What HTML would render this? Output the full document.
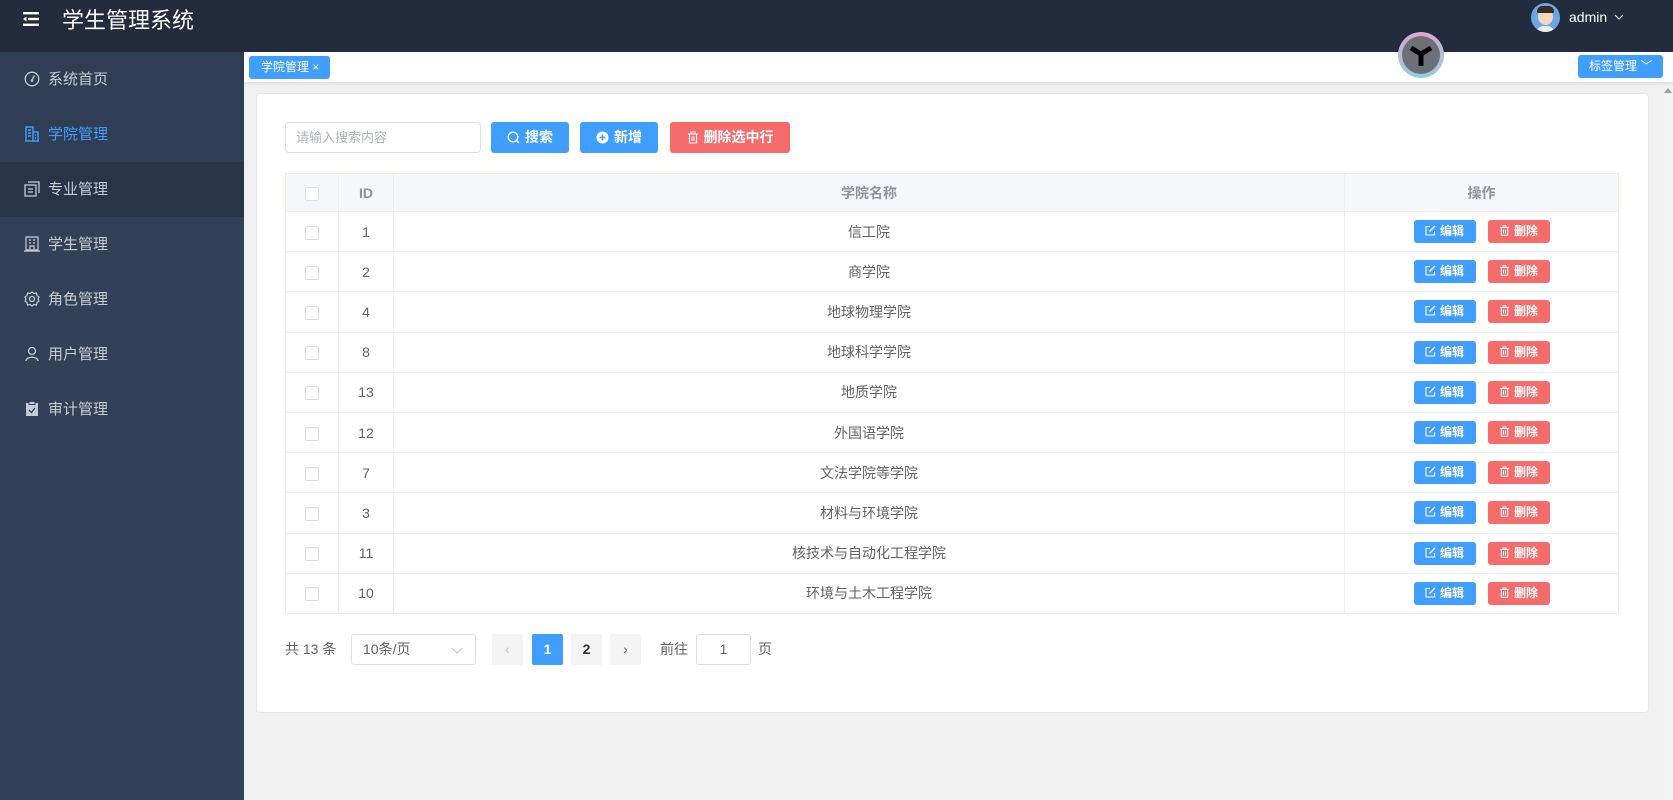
<!DOCTYPE html>
<html><head><meta charset="utf-8"><style>
*{box-sizing:border-box;margin:0;padding:0}
body{width:1673px;height:800px;overflow:hidden;background:#f0f0f0;font-family:"Liberation Sans","Noto Sans CJK SC",sans-serif;position:relative}
.hdr{position:absolute;left:0;top:0;width:1673px;height:52px;background:#232c3d}
.title{position:absolute;left:62px;top:3px;color:#fff;font-size:22px}
.side{position:absolute;left:0;top:52px;width:244px;height:748px;background:#324157}
.item{position:absolute;left:0;width:244px;height:55px;color:#c6ccd5;font-size:15px;line-height:55px;padding-left:48px}
.item svg{position:absolute;left:24px;top:19px}
.tabs{position:absolute;left:244px;top:52px;width:1429px;height:30px;background:#fff;box-shadow:0 2px 4px rgba(0,0,0,.08)}
.card{position:absolute;left:256px;top:93px;width:1393px;height:620px;background:#fff;border:1px solid #e6e6e6;border-radius:4px}
.btn{position:absolute;height:31px;border-radius:3px;color:#fff;font-size:14px;font-weight:bold;line-height:31px;text-align:center}
.btn svg{vertical-align:-2px;margin-right:5px}
.blue{background:#409eff}.red{background:#f56c6c}
table{position:absolute;left:285px;top:173px;width:1334px;border-collapse:collapse;font-size:14px;color:#606266}
td,th{border:1px solid #ebeef5;text-align:center;height:40.2px}
th{background:#f5f7fa;color:#909399;font-weight:bold;height:38px}
.cb{display:inline-block;width:14px;height:14px;border:1px solid #dcdfe6;border-radius:2px;background:#fff;vertical-align:middle}
.ob{display:inline-block;width:62px;height:23px;line-height:23px;border-radius:3px;color:#fff;font-size:12px;font-weight:bold;margin:0 6px}
.ob svg{vertical-align:-1px;margin-right:4px}
.pg{position:absolute;top:634px;height:31px;font-size:14px;color:#606266;line-height:31px;text-align:center}
.pb{background:#f4f4f5;border-radius:2px;width:31px}
</style></head><body>
<svg width="0" height="0" style="position:absolute"><defs>
<symbol id="ed" viewBox="0 0 11 11"><path d="M5 1.5 H1 V10 H9.5 V6" stroke="#fff" fill="none" stroke-width="1.1"/><path d="M4.5 6.5 L10 1" stroke="#fff" stroke-width="1.3"/></symbol>
<symbol id="tr" viewBox="0 0 11 11"><path d="M1 2.5 H10 M4 2.5 V1 H7 V2.5 M2.3 2.5 V10.3 H8.7 V2.5 M4.5 4.5 V8.5 M6.5 4.5 V8.5" stroke="#fff" stroke-width="1" fill="none"/></symbol>
</defs></svg>
<div class="hdr">
<svg style="position:absolute;left:23px;top:12px" width="17" height="14" viewBox="0 0 17 14"><rect x="0" y="0" width="16" height="2.4" fill="#fff"/><rect x="5" y="5.8" width="11" height="2.4" fill="#fff"/><rect x="0" y="11.6" width="16" height="2.4" fill="#fff"/><path d="M0 7 L3.5 4.5 V9.5Z" fill="#fff"/></svg>
<div class="title">学生管理系统</div>
<div style="position:absolute;left:1531px;top:3px;width:29px;height:29px;border-radius:50%;background:#6aa6e8;overflow:hidden"><div style="position:absolute;left:7px;top:5px;width:15px;height:17px;border-radius:50%;background:#f6d6b8"></div><div style="position:absolute;left:6px;top:3px;width:17px;height:7px;border-radius:8px 8px 2px 2px;background:#3a2a22"></div><div style="position:absolute;left:5px;top:23px;width:19px;height:8px;border-radius:8px 8px 0 0;background:#eee"></div></div>
<div style="position:absolute;left:1569px;top:9px;color:#fff;font-size:14px">admin</div>
<svg style="position:absolute;left:1614px;top:14px" width="10" height="6"><path d="M1 1 L5 5 L9 1" stroke="#fff" fill="none"/></svg>
</div>
<div class="side">
<div class="item" style="top:0;background:#2f3d55"><svg width="16" height="16" viewBox="0 0 16 16"><circle cx="8" cy="8" r="6.8" stroke="#c6ccd5" fill="none" stroke-width="1.3"/><path d="M8 9 L10.5 4.5" stroke="#c6ccd5" stroke-width="1.3"/><circle cx="8" cy="9.5" r="1.3" fill="#c6ccd5"/></svg>系统首页</div>
<div class="item" style="top:55px;background:#2f3d55;color:#409eff"><svg width="16" height="16" viewBox="0 0 16 16"><path d="M1 15 H15 M2 15 V1 H9 V15 M9 6 H14 V15 M4 4 H7 M4 7 H7 M4 10 H7 M11 9 H12 M11 12 H12" stroke="#409eff" fill="none" stroke-width="1.4"/></svg>学院管理</div>
<div class="item" style="top:110px;background:#283447"><svg width="16" height="16" viewBox="0 0 16 16"><path d="M4 1 H15 V12 M1 4 H12 V15 H1Z M4 8 H9 M4 11 H9" stroke="#c6ccd5" fill="none" stroke-width="1.3"/></svg>专业管理</div>
<div class="item" style="top:165px"><svg width="16" height="16" viewBox="0 0 16 16"><path d="M2 1 H14 V14 H2Z M0 15 H16 M5 4 H7 M9 4 H11 M5 7 H7 M9 7 H11 M6 14 V10 H10 V14" stroke="#c6ccd5" fill="none" stroke-width="1.2"/></svg>学生管理</div>
<div class="item" style="top:220px"><svg width="16" height="16" viewBox="0 0 16 16"><circle cx="8" cy="8" r="2.5" stroke="#c6ccd5" fill="none" stroke-width="1.2"/><path d="M8 1 L10 2.5 L12.5 2 L13 4.5 L15 6 L14 8 L15 10 L13 11.5 L12.5 14 L10 13.5 L8 15 L6 13.5 L3.5 14 L3 11.5 L1 10 L2 8 L1 6 L3 4.5 L3.5 2 L6 2.5Z" stroke="#c6ccd5" fill="none" stroke-width="1.2"/></svg>角色管理</div>
<div class="item" style="top:275px"><svg width="16" height="16" viewBox="0 0 16 16"><circle cx="8" cy="5" r="3.5" stroke="#c6ccd5" fill="none" stroke-width="1.3"/><path d="M2 15 C2 10 14 10 14 15" stroke="#c6ccd5" fill="none" stroke-width="1.3"/></svg>用户管理</div>
<div class="item" style="top:330px"><svg width="16" height="16" viewBox="0 0 16 16"><rect x="2" y="2" width="12" height="13" fill="#c6ccd5"/><rect x="5" y="0.5" width="6" height="3" fill="#c6ccd5" stroke="#324157"/><path d="M5 9 L7.5 11.5 L11 7" stroke="#324157" fill="none" stroke-width="1.3"/></svg>审计管理</div>
</div>
<div class="tabs">
<div style="position:absolute;left:5px;top:4px;width:81px;height:23px;background:#409eff;border-radius:3px;color:#fff;font-size:12px;line-height:23px;padding-left:12px">学院管理 ×</div>
<div style="position:absolute;left:1154px;top:-20px;width:46px;height:46px;border-radius:50%;background:conic-gradient(#e0a6cf,#8fd0e0,#e0a6cf);"></div>
<div style="position:absolute;left:1158px;top:-16px;width:38px;height:38px;border-radius:50%;background:#6e7078"></div>
<svg style="position:absolute;left:1163px;top:-11px" width="28" height="28" viewBox="0 0 28 28"><path d="M4 7 L14 13 L24 7 M14 13 V25" stroke="#000" stroke-width="5" fill="none"/></svg>
<div style="position:absolute;left:1334px;top:3px;width:85px;height:23px;background:#409eff;border-radius:3px;color:#fff;font-size:12px;line-height:23px;padding-left:11px">标签管理 ﹀</div>
</div>
<div style="position:absolute;left:1664px;top:86px;width:9px;height:714px;background:#f3f3f3"><div style="position:absolute;left:0;top:2px;width:0;height:0;border:4px solid transparent;border-bottom:5px solid #a0a0a0;border-top:none"></div></div>
<div class="card"></div>
<div style="position:absolute;left:285px;top:122px;width:196px;height:31px;border:1px solid #dcdfe6;border-radius:4px;font-size:13px;color:#b0b3b8;line-height:29px;padding-left:10px">请输入搜索内容</div>
<div class="btn blue" style="left:491px;top:122px;width:78px"><svg width="13" height="13" viewBox="0 0 13 13"><circle cx="6" cy="6" r="4.8" stroke="#fff" stroke-width="1.3" fill="none"/><path d="M9.5 9.5 L12 12" stroke="#fff" stroke-width="1.3"/></svg>搜索</div>
<div class="btn blue" style="left:580px;top:122px;width:78px"><svg width="13" height="13" viewBox="0 0 13 13"><circle cx="6.5" cy="6.5" r="6" fill="#fff"/><path d="M6.5 3.5 V9.5 M3.5 6.5 H9.5" stroke="#409eff" stroke-width="1.6"/></svg>新增</div>
<div class="btn red" style="left:670px;top:122px;width:120px"><svg width="12" height="13" viewBox="0 0 12 13"><path d="M1 3 H11 M4 3 V1 H8 V3 M2.5 3 V12 H9.5 V3 M5 5.5 V10 M7 5.5 V10" stroke="#fff" stroke-width="1.1" fill="none"/></svg>删除选中行</div>
<table>
<tr><th style="width:53px"><span class="cb"></span></th><th style="width:55px">ID</th><th>学院名称</th><th style="width:274px">操作</th></tr>
<tr><td><span class="cb"></span></td><td>1</td><td>信工院</td><td><span class="ob blue"><svg width="11" height="11"><use href="#ed"/></svg>编辑</span><span class="ob red"><svg width="11" height="11"><use href="#tr"/></svg>删除</span></td></tr>
<tr><td><span class="cb"></span></td><td>2</td><td>商学院</td><td><span class="ob blue"><svg width="11" height="11"><use href="#ed"/></svg>编辑</span><span class="ob red"><svg width="11" height="11"><use href="#tr"/></svg>删除</span></td></tr>
<tr><td><span class="cb"></span></td><td>4</td><td>地球物理学院</td><td><span class="ob blue"><svg width="11" height="11"><use href="#ed"/></svg>编辑</span><span class="ob red"><svg width="11" height="11"><use href="#tr"/></svg>删除</span></td></tr>
<tr><td><span class="cb"></span></td><td>8</td><td>地球科学学院</td><td><span class="ob blue"><svg width="11" height="11"><use href="#ed"/></svg>编辑</span><span class="ob red"><svg width="11" height="11"><use href="#tr"/></svg>删除</span></td></tr>
<tr><td><span class="cb"></span></td><td>13</td><td>地质学院</td><td><span class="ob blue"><svg width="11" height="11"><use href="#ed"/></svg>编辑</span><span class="ob red"><svg width="11" height="11"><use href="#tr"/></svg>删除</span></td></tr>
<tr><td><span class="cb"></span></td><td>12</td><td>外国语学院</td><td><span class="ob blue"><svg width="11" height="11"><use href="#ed"/></svg>编辑</span><span class="ob red"><svg width="11" height="11"><use href="#tr"/></svg>删除</span></td></tr>
<tr><td><span class="cb"></span></td><td>7</td><td>文法学院等学院</td><td><span class="ob blue"><svg width="11" height="11"><use href="#ed"/></svg>编辑</span><span class="ob red"><svg width="11" height="11"><use href="#tr"/></svg>删除</span></td></tr>
<tr><td><span class="cb"></span></td><td>3</td><td>材料与环境学院</td><td><span class="ob blue"><svg width="11" height="11"><use href="#ed"/></svg>编辑</span><span class="ob red"><svg width="11" height="11"><use href="#tr"/></svg>删除</span></td></tr>
<tr><td><span class="cb"></span></td><td>11</td><td>核技术与自动化工程学院</td><td><span class="ob blue"><svg width="11" height="11"><use href="#ed"/></svg>编辑</span><span class="ob red"><svg width="11" height="11"><use href="#tr"/></svg>删除</span></td></tr>
<tr><td><span class="cb"></span></td><td>10</td><td>环境与土木工程学院</td><td><span class="ob blue"><svg width="11" height="11"><use href="#ed"/></svg>编辑</span><span class="ob red"><svg width="11" height="11"><use href="#tr"/></svg>删除</span></td></tr>
</table>
<div class="pg" style="left:285px">共 13 条</div>
<div class="pg" style="left:351px;width:125px;border:1px solid #dcdfe6;border-radius:3px;text-align:left;padding-left:11px;line-height:29px">10条/页<svg style="position:absolute;right:12px;top:12px" width="12" height="7"><path d="M1 1 L6 6 L11 1" stroke="#c0c4cc" fill="none"/></svg></div>
<div class="pg pb" style="left:492px;color:#c0c4cc">‹</div>
<div class="pg pb" style="left:532px;background:#409eff;color:#fff;font-weight:bold">1</div>
<div class="pg pb" style="left:571px;color:#303133;font-weight:bold">2</div>
<div class="pg pb" style="left:610px">›</div>
<div class="pg" style="left:660px">前往</div>
<div class="pg" style="left:696px;width:55px;border:1px solid #dcdfe6;border-radius:3px;line-height:29px">1</div>
<div class="pg" style="left:758px">页</div>
</body></html>
